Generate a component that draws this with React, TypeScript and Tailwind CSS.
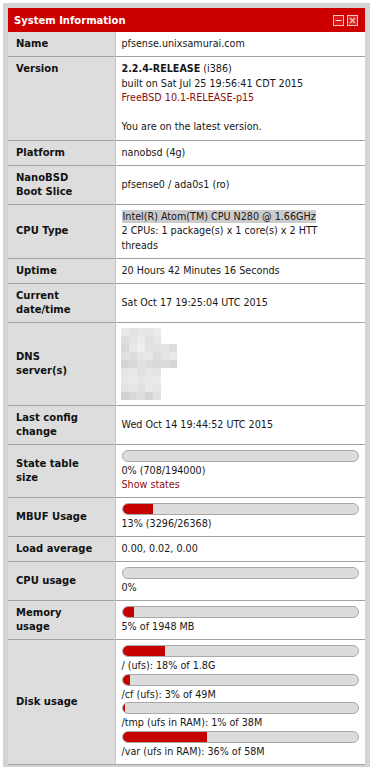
import React from 'react';

const dnsPixels: string[][] = [
  ['bg-[#e9e9e9]', 'bg-[#e2e2e2]', 'bg-[#e7e7e7]', 'bg-[#e5e5e5]', 'bg-[#eaeaea]', '', '', ''],
  ['bg-[#dedede]', 'bg-[#e4e4e4]', 'bg-[#ececec]', 'bg-[#e1e1e1]', 'bg-[#e6e6e6]', '', '', ''],
  ['bg-[#d9d9d9]', 'bg-[#e7e7e7]', 'bg-[#efefef]', 'bg-[#e3e3e3]', 'bg-[#e1e1e1]', 'bg-[#e5e5e5]', 'bg-[#dddddd]', ''],
  ['bg-[#e1e1e1]', 'bg-[#dcdcdc]', 'bg-[#e5e5e5]', 'bg-[#e8e8e8]', 'bg-[#dddddd]', 'bg-[#e4e4e4]', 'bg-[#e9e9e9]', ''],
  ['bg-[#d5d5d5]', 'bg-[#d9d9d9]', 'bg-[#e1e1e1]', 'bg-[#dcdcdc]', 'bg-[#d8d8d8]', 'bg-[#dcdcdc]', 'bg-[#d7d7d7]', ''],
  ['bg-[#e5e5e5]', 'bg-[#e9e9e9]', 'bg-[#e1e1e1]', 'bg-[#e7e7e7]', 'bg-[#e3e3e3]', '', '', ''],
  ['bg-[#e7e7e7]', 'bg-[#ebebeb]', 'bg-[#e5e5e5]', 'bg-[#e9e9e9]', 'bg-[#ebebeb]', '', '', ''],
  ['bg-[#e3e3e3]', 'bg-[#e7e7e7]', 'bg-[#e1e1e1]', 'bg-[#e9e9e9]', 'bg-[#e5e5e5]', '', '', ''],
  ['bg-[#d2d2d2]', 'bg-[#d9d9d9]', 'bg-[#dddddd]', 'bg-[#d5d5d5]', 'bg-[#e1e1e1]', '', '', ''],
];

function Bar({ pct }: { pct: number }) {
  return (
    <div className="h-[12px] w-full rounded-full border border-[#a9a9a9] bg-[#dcdcdc] overflow-hidden mb-[2px]">
      <div className="h-full bg-[#c40000]" style={{ width: `${pct}%` }} />
    </div>
  );
}

function Row({ label, children, top }: { label: React.ReactNode; children: React.ReactNode; top?: boolean }) {
  return (
    <tr className="border-b border-[#a3a3a3]">
      <td
        className={`w-[107px] bg-[#dddddd] border-r border-[#c6c6c6] pl-2 pr-1 py-[5px] font-bold text-[10px] leading-[14px] text-[#111] whitespace-nowrap ${
          top ? 'align-top' : 'align-middle'
        }`}
      >
        {label}
      </td>
      <td
        className={`bg-white px-[6px] py-[5px] text-[9.6px] leading-[14px] text-[#161616] whitespace-nowrap ${
          top ? 'align-top' : 'align-middle'
        }`}
      >
        {children}
      </td>
    </tr>
  );
}

export default function App() {
  return (
    <div className="min-h-screen bg-white pt-[3px] pl-[3px] font-['DejaVu_Sans',Verdana,sans-serif]">
      <div className="w-[367px] border-[5px] border-[#d3d3d3]">
        <div className="flex items-center justify-between h-[24px] bg-[#cc0000] pl-[6px] pr-[7px]">
          <span className="text-white font-bold text-[10px]">System Information</span>
          <div className="flex gap-[3px]">
            <svg width="11" height="11" viewBox="0 0 11 11">
              <rect x="0.5" y="0.5" width="10" height="10" fill="#d41a1a" stroke="#f2c4c4" />
              <line x1="2.5" y1="5.5" x2="8.5" y2="5.5" stroke="#f7dada" strokeWidth="1" />
            </svg>
            <svg width="11" height="11" viewBox="0 0 11 11">
              <rect x="0.5" y="0.5" width="10" height="10" fill="#d62a2a" stroke="#f2c4c4" />
              <path d="M3 3 L8 8 M8 3 L3 8" stroke="#f5c8c8" strokeWidth="1.2" />
            </svg>
          </div>
        </div>
        <table className="w-full border-collapse table-fixed">
          <tbody>
            <Row label="Name">pfsense.unixsamurai.com</Row>
            <Row label="Version" top>
              <div className="leading-[14.5px]">
                <div>
                  <b>2.2.4-RELEASE</b> (i386)
                </div>
                <div>built on Sat Jul 25 19:56:41 CDT 2015</div>
                <div className="text-[#8b0d0d]">FreeBSD 10.1-RELEASE-p15</div>
                <div>&nbsp;</div>
                <div>You are on the latest version.</div>
              </div>
            </Row>
            <Row label="Platform">nanobsd (4g)</Row>
            <Row
              label={
                <>
                  NanoBSD
                  <br />
                  Boot Slice
                </>
              }
            >
              pfsense0 / ada0s1 (ro)
            </Row>
            <Row label="CPU Type">
              <div className="leading-[14.5px]">
                <div>
                  <span className="bg-[#cbcbcb] pl-[1px] py-[1px]">Intel(R) Atom(TM) CPU N280 @ 1.66GHz</span>
                </div>
                <div>2 CPUs: 1 package(s) x 1 core(s) x 2 HTT</div>
                <div>threads</div>
              </div>
            </Row>
            <Row label="Uptime">20 Hours 42 Minutes 16 Seconds</Row>
            <Row
              label={
                <>
                  Current
                  <br />
                  date/time
                </>
              }
            >
              Sat Oct 17 19:25:04 UTC 2015
            </Row>
            <Row
              label={
                <>
                  DNS
                  <br />
                  server(s)
                </>
              }
            >
              <div className="flex flex-col -ml-[1px]">
                {dnsPixels.map((row, i) => (
                  <div key={i} className="flex h-[8px]">
                    {row.map((c, j) => (
                      <div key={j} className={`w-[8px] h-[8px] ${c}`} />
                    ))}
                  </div>
                ))}
              </div>
            </Row>
            <Row
              label={
                <>
                  Last config
                  <br />
                  change
                </>
              }
            >
              Wed Oct 14 19:44:52 UTC 2015
            </Row>
            <Row
              label={
                <>
                  State table
                  <br />
                  size
                </>
              }
            >
              <Bar pct={0} />
              <div>0% (708/194000)</div>
              <div className="text-[#8b0d0d]">Show states</div>
            </Row>
            <Row label="MBUF Usage">
              <Bar pct={13} />
              <div>13% (3296/26368)</div>
            </Row>
            <Row label="Load average">0.00, 0.02, 0.00</Row>
            <Row label="CPU usage">
              <Bar pct={0} />
              <div>0%</div>
            </Row>
            <Row
              label={
                <>
                  Memory
                  <br />
                  usage
                </>
              }
            >
              <Bar pct={5} />
              <div>5% of 1948 MB</div>
            </Row>
            <Row label="Disk usage">
              <div className="leading-[14.5px]">
                <Bar pct={18} />
                <div>/ (ufs): 18% of 1.8G</div>
                <Bar pct={3} />
                <div>/cf (ufs): 3% of 49M</div>
                <Bar pct={1} />
                <div>/tmp (ufs in RAM): 1% of 38M</div>
                <Bar pct={36} />
                <div>/var (ufs in RAM): 36% of 58M</div>
              </div>
            </Row>
          </tbody>
        </table>
      </div>
    </div>
  );
}
